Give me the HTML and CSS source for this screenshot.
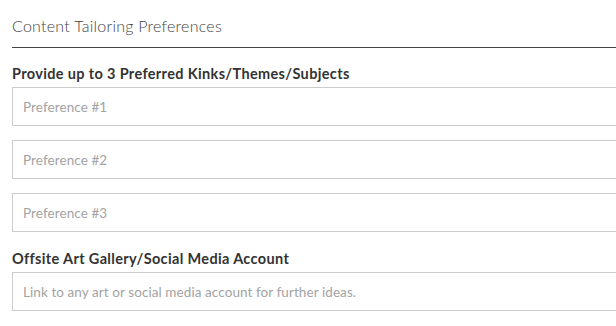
FILE: index.html
```html
<!DOCTYPE html>
<html lang="en">
<head>
  <meta charset="UTF-8">
  <meta name="viewport" content="width=device-width, initial-scale=1.0">
  <title>Content Tailoring Preferences</title>
  <link rel="stylesheet" href="styles.css">
</head>
<body>

  <div class="panel">
    <h4 class="panel-title">Content Tailoring Preferences</h4>

    <form class="form">
      <label for="pref1">Provide up to 3 Preferred Kinks/Themes/Subjects</label>
      <input type="text" id="pref1" placeholder="Preference #1">
      <input type="text" id="pref2" placeholder="Preference #2">
      <input type="text" id="pref3" placeholder="Preference #3">

      <label for="gallery">Offsite Art Gallery/Social Media Account</label>
      <input type="text" id="gallery" placeholder="Link to any art or social media account for further ideas.">
    </form>
  </div>

</body>
</html>
```

FILE: styles.css
```css
* {
  box-sizing: border-box;
}

body {
  margin: 0;
  padding: 0;
  font-family: Lato, "Open Sans", sans-serif;
  color: #333;
  background: #fff;
  overflow: hidden;
}

.panel {
  width: 640px;
  padding: 0 0 0 12px;
}

.panel-title {
  margin: 0;
  padding: 16px 0 12px;
  font-size: 16px;
  font-weight: 300;
  letter-spacing: 0.25px;
  color: #444;
  border-bottom: 1px solid #444;
}

.form {
  display: flex;
  flex-direction: column;
}

.form label {
  display: block;
  margin: 17px 0 5px;
  font-size: 14.5px;
  font-weight: 700;
  letter-spacing: 0.35px;
  color: #333;
}

.form input {
  width: 100%;
  height: 39px;
  margin-bottom: 14px;
  padding: 0 10px;
  border: 1px solid #ccc;
  font-family: inherit;
  font-size: 13.5px;
  letter-spacing: 0.08px;
  color: #333;
  outline: none;
}

.form input::placeholder {
  color: #a3a3a3;
  font-weight: 400;
}

.form input + label {
  margin-top: 4px;
}
```
